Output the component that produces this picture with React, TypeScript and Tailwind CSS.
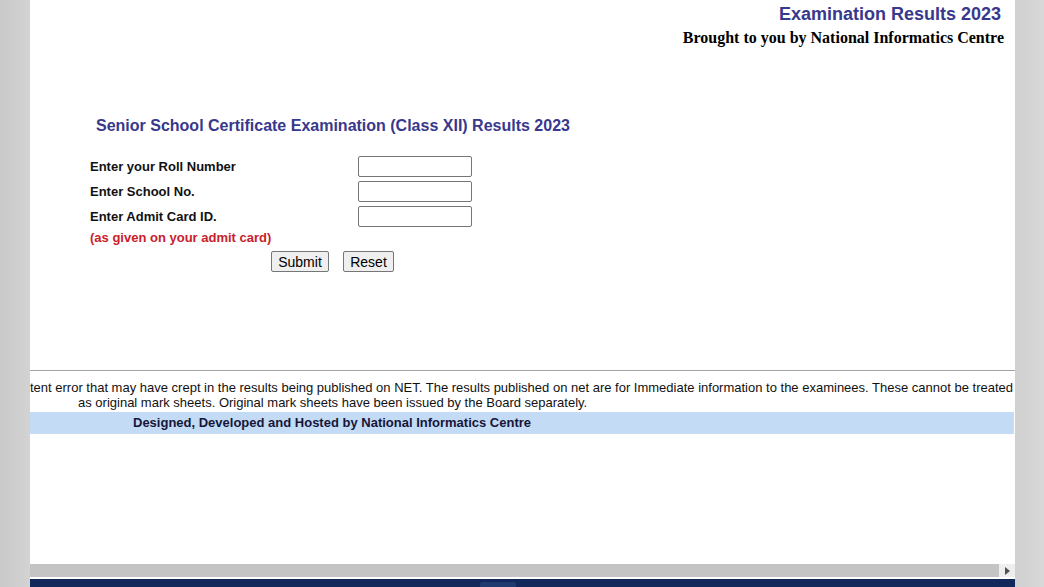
export default function App() {
  return (
    <div className="flex h-[587px] w-[1044px] overflow-hidden bg-[#cfcfcf] font-['Liberation_Sans',Arial,sans-serif]">
      <div className="w-[30px] shrink-0 bg-gradient-to-r from-[#c9c9c9] to-[#d3d3d3]" />

      <div className="flex w-[985px] shrink-0 flex-col bg-white">
        {/* header */}
        <div className="flex flex-col items-end pr-[11px] pt-[4px]">
          <div className="pr-[3px] text-[18px] font-bold leading-[21px] text-[#38388c]">
            Examination Results 2023
          </div>
          <div className="mt-[3px] font-['Liberation_Serif','Times_New_Roman',serif] text-[16px] font-bold leading-[20px] text-black">
            Brought to you by National Informatics Centre
          </div>
        </div>

        {/* form */}
        <div className="mt-[68px] pl-[66px] text-[16px] font-bold leading-[20px] text-[#38388c]">
          Senior School Certificate Examination (Class XII) Results 2023
        </div>

        <div className="mt-[20px] flex flex-col gap-[4px] pl-[60px]">
          {["Enter your Roll Number", "Enter School No.", "Enter Admit Card ID."].map((label) => (
            <div key={label} className="flex items-center">
              <div className="w-[268px] text-[13px] font-bold text-[#111]">{label}</div>
              <input
                type="text"
                className="h-[21px] w-[114px] rounded-[2px] border border-[#767676] bg-white"
              />
            </div>
          ))}
        </div>
        <div className="mt-[2px] pl-[60px] text-[13px] font-bold leading-[18px] text-[#c9212b]">
          (as given on your admit card)
        </div>
        <div className="mt-[4px] flex gap-[14px] pl-[241px]">
          <button className="h-[21px] w-[58px] rounded-[2px] border border-[#767676] bg-[#efefef] text-[14px] leading-[18px] text-black">
            Submit
          </button>
          <button className="h-[21px] w-[51px] rounded-[2px] border border-[#767676] bg-[#efefef] text-[14px] leading-[18px] text-black">
            Reset
          </button>
        </div>

        {/* notice */}
        <div className="mt-[98px] h-px w-full bg-[#a3a3a3]" />
        <div className="mt-[9px] flex justify-end whitespace-nowrap pr-[2px] text-[13px] leading-[15px] text-[#111]">
          tent error that may have crept in the results being published on NET. The results published on net are for Immediate information to the examinees. These cannot be treated
        </div>
        <div className="pl-[48px] text-[13px] leading-[15px] text-[#111]">
          as original mark sheets. Original mark sheets have been issued by the Board separately.
        </div>
        <div className="mr-[1px] mt-[2px] flex h-[22px] items-center bg-[#c3dbf5] pl-[103px] text-[13px] font-bold text-[#16163a]">
          Designed, Developed and Hosted by National Informatics Centre
        </div>

        <div className="flex-1" />

        {/* horizontal scrollbar */}
        <div className="flex h-[13px]">
          <div className="flex-1 bg-[#c4c4c4]" />
          <div className="flex w-[16px] items-center justify-center bg-[#eeeeee]">
            <svg width="5" height="8" viewBox="0 0 5 8">
              <path d="M0 0 L5 4 L0 8 Z" fill="#505050" />
            </svg>
          </div>
        </div>
        <div className="h-[2px] bg-white" />
        <div className="flex h-[8px] justify-center bg-[#13285a]">
          <div className="ml-[-50px] mt-[3px] h-[5px] w-[36px] rounded-t-[2px] bg-[#1f3a6e]" />
        </div>
      </div>

      <div className="w-[29px] shrink-0 bg-gradient-to-r from-[#d0d0d0] to-[#d8d8d8]" />
    </div>
  );
}
